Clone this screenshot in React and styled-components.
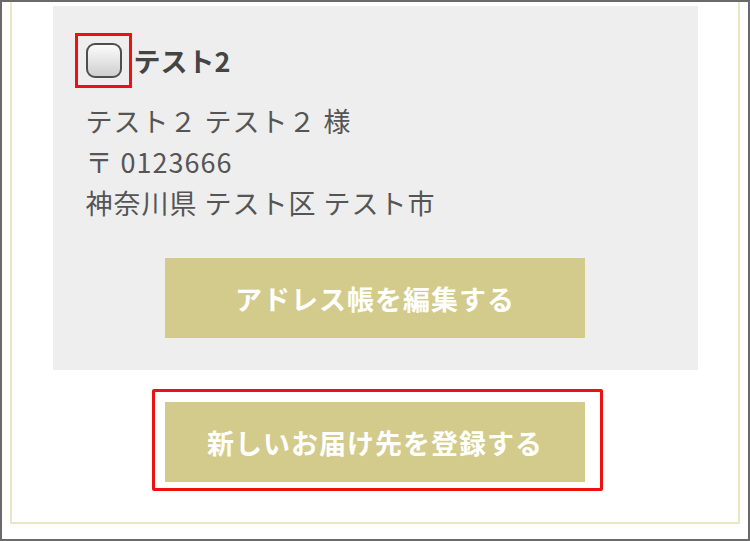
import React from 'react';
import styled, { createGlobalStyle } from 'styled-components';

const GlobalStyle = createGlobalStyle`
  html, body {
    margin: 0;
    padding: 0;
    background: #ffffff;
  }
  body {
    font-family: "Noto Sans CJK JP", "Noto Sans", sans-serif;
  }
`;

const address = {
  title: 'テスト2',
  name: 'テスト２ テスト２ 様',
  zip: '〒 0123666',
  place: '神奈川県 テスト区 テスト市',
};

const App = () => {
  return (
    <Frame>
      <GlobalStyle />
      <Card>
        <AddressPanel>
          <TitleRow>
            <CheckWrap>
              <CheckBox type="checkbox" />
            </CheckWrap>
            <Title>{address.title}</Title>
          </TitleRow>
          <AddressText>
            <Line>{address.name}</Line>
            <Line>{address.zip}</Line>
            <Line>{address.place}</Line>
          </AddressText>
          <ActionButton>アドレス帳を編集する</ActionButton>
        </AddressPanel>
        <Highlight>
          <ActionButton>新しいお届け先を登録する</ActionButton>
        </Highlight>
      </Card>
    </Frame>
  );
};

export default App;

// Styles
const Frame = styled.div`
  width: 750px;
  height: 541px;
  box-sizing: border-box;
  border: 2px solid #6a6a6a;
  background: #ffffff;
  overflow: hidden;
`;

const Card = styled.div`
  margin-left: 8px;
  width: 730px;
  height: 522px;
  box-sizing: border-box;
  border: 2px solid #e8e9c4;
  border-top: none;
  padding: 4px 40px 0 40px;
  display: flex;
  flex-direction: column;
  align-items: center;
`;

const AddressPanel = styled.div`
  width: 645px;
  height: 364px;
  box-sizing: border-box;
  background: #eeeeee;
  padding: 37px 0 0 33px;
  display: flex;
  flex-direction: column;
`;

const TitleRow = styled.div`
  display: flex;
  align-items: center;
  gap: 12px;
  height: 35px;
`;

const CheckWrap = styled.span`
  position: relative;
  display: flex;

  &::after {
    content: '';
    position: absolute;
    top: -10px;
    left: -11px;
    right: -10px;
    bottom: -10px;
    border: 3px solid #ee1111;
    pointer-events: none;
  }
`;

const CheckBox = styled.input`
  appearance: none;
  -webkit-appearance: none;
  margin: 0;
  width: 36px;
  height: 35px;
  box-sizing: border-box;
  border: 2px solid #4e4e4e;
  border-radius: 9px;
  background: linear-gradient(#fbfbfb, #cfcfcf);
`;

const Title = styled.span`
  font-size: 27px;
  font-weight: 700;
  color: #444444;
  line-height: 1;
`;

const AddressText = styled.div`
  margin-top: 22px;
  display: flex;
  flex-direction: column;
`;

const Line = styled.div`
  font-size: 27px;
  line-height: 41px;
  letter-spacing: 1px;
  color: #555555;
  white-space: pre;
`;

const ActionButton = styled.button`
  align-self: center;
  width: 420px;
  height: 80px;
  margin-top: 35px;
  margin-left: -33px;
  border: none;
  background: #d3cb8b;
  color: #ffffff;
  font-family: "Noto Sans CJK JP", "Noto Sans", sans-serif;
  font-size: 27px;
  font-weight: 700;
  letter-spacing: 1px;
  cursor: pointer;
  padding: 0;
`;

const Highlight = styled.div`
  position: relative;
  margin-top: 32px;
  display: flex;

  & > button {
    margin: 0;
  }

  &::after {
    content: '';
    position: absolute;
    top: -13px;
    left: -13px;
    right: -18px;
    bottom: -9px;
    border: 3px solid #ee1111;
    border-radius: 2px;
    pointer-events: none;
  }
`;
